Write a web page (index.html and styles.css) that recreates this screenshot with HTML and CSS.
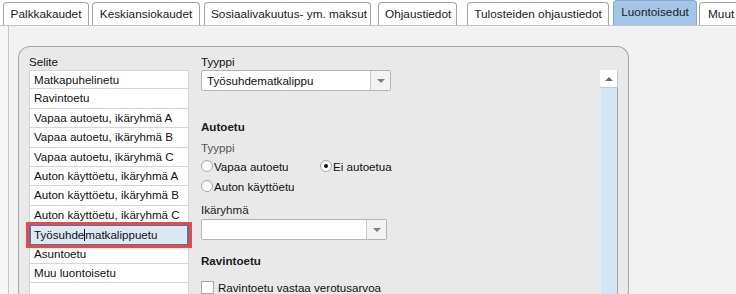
FILE: index.html
```html
<!DOCTYPE html>
<html lang="fi">
<head>
    <meta charset="UTF-8">
    <title>Luontoisedut</title>
    <link rel="stylesheet" href="styles.css">
</head>
<body>
    <!-- Tabs -->
    <div class="tabs">
        <a class="tab t1">Palkkakaudet</a>
        <a class="tab t2">Keskiansiokaudet</a>
        <a class="tab t3">Sosiaalivakuutus- ym. maksut</a>
        <a class="tab t4">Ohjaustiedot</a>
        <a class="tab t5">Tulosteiden ohjaustiedot</a>
        <a class="tab t6 active">Luontoisedut</a>
        <a class="tab t7">Muut</a>
    </div>

    <!-- Page -->
    <div class="content">
        <div class="page">
            <div class="panel">
                <!-- Selite list -->
                <div class="list-col">
                    <div class="label">Selite</div>
                    <ul class="list">
                        <li>Matkapuhelinetu</li>
                        <li>Ravintoetu</li>
                        <li>Vapaa autoetu, ikäryhmä A</li>
                        <li>Vapaa autoetu, ikäryhmä B</li>
                        <li>Vapaa autoetu, ikäryhmä C</li>
                        <li>Auton käyttöetu, ikäryhmä A</li>
                        <li>Auton käyttöetu, ikäryhmä B</li>
                        <li>Auton käyttöetu, ikäryhmä C</li>
                        <li class="selected"><span class="edit">Työsuhde<span class="caret"></span>matkalippuetu</span></li>
                        <li>Asuntoetu</li>
                        <li>Muu luontoisetu</li>
                        <li></li>
                    </ul>
                </div>

                <!-- Details -->
                <div class="form-col">
                    <div class="label">Tyyppi</div>
                    <div class="select wide">
                        <span class="select-text">Työsuhdematkalippu</span>
                        <span class="select-btn"><span class="arrow"></span></span>
                    </div>

                    <div class="heading">Autoetu</div>
                    <div class="label sub">Tyyppi</div>
                    <div class="radio-row">
                        <span class="radio"></span><span class="radio-text first">Vapaa autoetu</span>
                        <span class="radio checked"></span><span class="radio-text">Ei autoetua</span>
                    </div>
                    <div class="radio-row">
                        <span class="radio"></span><span class="radio-text">Auton käyttöetu</span>
                    </div>

                    <div class="label sub2">Ikäryhmä</div>
                    <div class="select">
                        <span class="select-text"></span>
                        <span class="select-btn"><span class="arrow"></span></span>
                    </div>

                    <div class="heading second">Ravintoetu</div>
                    <div class="check-row">
                        <span class="checkbox"></span><span class="check-text">Ravintoetu vastaa verotusarvoa</span>
                    </div>
                </div>

                <!-- Scrollbar -->
                <div class="scrollbar">
                    <div class="scroll-up"><span class="up-arrow"></span></div>
                    <div class="scroll-track"></div>
                </div>
            </div>
        </div>
    </div>
</body>
</html>
```

FILE: styles.css
```css
/* General */
body {
    margin: 0;
    height: 294px;
    overflow: hidden;
    background-color: #fff;
    font-family: "Liberation Sans", Arial, sans-serif;
    font-size: 11.6px;
    color: #111;
}

/* Tabs */
.tabs {
    display: flex;
    align-items: flex-end;
    height: 25px;
    padding-left: 3px;
    white-space: nowrap;
    overflow: hidden;
}
.tab {
    box-sizing: border-box;
    height: 23px;
    line-height: 22px;
    padding: 0 6px;
    margin-right: 3px;
    border: 1px solid #a3a3a3;
    border-bottom: none;
    border-radius: 4px 4px 0 0;
    background-color: #fff;
    color: #1a1a1a;
    text-align: center;
    flex-shrink: 0;
    font-size: 11.8px;
}
.tab.t1 { width: 86px; }
.tab.t2 { width: 108px; margin-right: 4px; }
.tab.t3 { width: 167px; margin-right: 7px; }
.tab.t4 { width: 79px; margin-right: 10px; }
.tab.t5 { width: 142px; margin-right: 4px; }
.tab.t6 { width: 84px; margin-right: 2px; }
.tab.t7 { width: 60px; text-align: left; padding-left: 8px; }
.tab.active {
    height: 25px;
    line-height: 22px;
    background-color: #a2c5e8;
    border-color: #8aa8c8;
}

/* Page */
.content {
    padding-left: 8px;
    background-color: #f6f6f6;
    border-top: 1px solid #c4c4c4;
}
.page {
    height: 268px;
    padding: 20px 0 0 9px;
    border-left: 1px solid #c8c8c8;
    background-color: #f2f2f2;
}
.panel {
    display: flex;
    box-sizing: border-box;
    width: 611px;
    height: 260px;
    padding: 8px 10px 0 10px;
    border: 1px solid #a6a6a6;
    border-bottom: none;
    border-radius: 12px 12px 0 0;
    background-color: #e9e9e9;
}

/* Selite list */
.list-col {
    width: 160px;
}
.label {
    line-height: 13px;
    margin-bottom: 2px;
    color: #111;
}
.list {
    list-style: none;
    margin: 0;
    padding: 0;
}
.list li {
    box-sizing: border-box;
    height: 19.4px;
    line-height: 18px;
    padding-left: 4px;
    background-color: #fff;
    border: 1px solid #d6d6d6;
    border-top: none;
    white-space: nowrap;
}
.list li:first-child {
    border-top: 1px solid #d6d6d6;
}
.list li.selected {
    position: relative;
    padding: 0;
    border: none;
    background: none;
    outline: 3px solid #e64a4a;
    outline-offset: 0;
    box-shadow: 0 3px 3px rgba(0, 0, 0, 0.25);
}
.edit {
    display: block;
    box-sizing: border-box;
    height: 19.4px;
    line-height: 17px;
    padding-left: 3px;
    background-color: #dce9f5;
    border: 1px solid #4d78a6;
    border-left-width: 2px;
    border-right-width: 2px;
}
.caret {
    display: inline-block;
    width: 1px;
    height: 12px;
    margin-bottom: -2px;
    background-color: #000;
}

/* Details column */
.form-col {
    margin-left: 12px;
    width: 200px;
}
.select {
    display: flex;
    box-sizing: border-box;
    width: 186px;
    height: 21px;
    border: 1px solid #b4b4b4;
    border-radius: 2px;
    background-color: #fff;
}
.select.wide {
    width: 190px;
}
.select-text {
    flex: 1;
    line-height: 19px;
    padding-left: 5px;
}
.select-btn {
    display: flex;
    align-items: center;
    justify-content: center;
    width: 19px;
    border-left: 1px solid #c8c8c8;
    background-color: #f3f3f3;
}
.arrow {
    width: 0;
    height: 0;
    border-left: 4px solid transparent;
    border-right: 4px solid transparent;
    border-top: 4px solid #7a7f88;
}
.heading {
    margin-top: 29px;
    line-height: 14px;
    font-weight: bold;
    color: #1a1a1a;
}
.heading.second {
    margin-top: 14px;
}
.label.sub {
    margin-top: 7px;
    margin-bottom: 2px;
    color: #555;
}
.label.sub2 {
    margin-top: 7px;
    margin-bottom: 3px;
    color: #222;
}

/* Radio buttons */
.radio-row {
    display: flex;
    align-items: center;
    height: 20px;
}
.radio {
    box-sizing: border-box;
    position: relative;
    width: 12px;
    height: 12px;
    border: 1px solid #a9a9a9;
    border-radius: 50%;
    background: linear-gradient(#f4f4f4, #fff);
}
.radio.checked::after {
    content: "";
    position: absolute;
    left: 3px;
    top: 3px;
    width: 4px;
    height: 4px;
    border-radius: 50%;
    background-color: #111;
}
.radio-text {
    margin-left: 1px;
}
.radio-text.first {
    width: 106px;
}

/* Checkbox */
.check-row {
    display: flex;
    align-items: center;
    margin-top: 13px;
}
.checkbox {
    box-sizing: border-box;
    width: 13px;
    height: 13px;
    border: 1px solid #a9a9a9;
    background-color: #fff;
}
.check-text {
    margin-left: 4px;
    white-space: nowrap;
}

/* Scrollbar */
.scrollbar {
    margin-left: auto;
    margin-top: 15px;
    width: 18px;
    display: flex;
    flex-direction: column;
}
.scroll-up {
    display: flex;
    align-items: center;
    justify-content: center;
    height: 17px;
    background-color: #fff;
    border-right: 1px solid #c8c8c8;
    border-bottom: 1px solid #c8c8c8;
}
.up-arrow {
    width: 0;
    height: 0;
    border-left: 4px solid transparent;
    border-right: 4px solid transparent;
    border-bottom: 4px solid #5e6f8f;
}
.scroll-track {
    flex: 1;
    background-color: #d4e6f6;
    border-left: 1px solid #e2ecf5;
    border-right: 1px solid #a6a6a6;
}
```
